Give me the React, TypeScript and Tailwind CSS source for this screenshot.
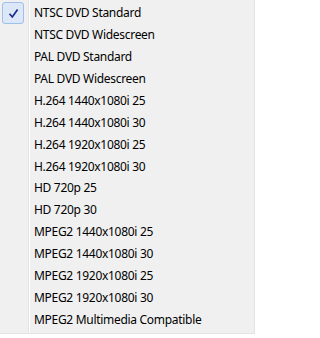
import React from 'react';

const items = [
  'NTSC DVD Standard',
  'NTSC DVD Widescreen',
  'PAL DVD Standard',
  'PAL DVD Widescreen',
  'H.264 1440x1080i 25',
  'H.264 1440x1080i 30',
  'H.264 1920x1080i 25',
  'H.264 1920x1080i 30',
  'HD 720p 25',
  'HD 720p 30',
  'MPEG2 1440x1080i 25',
  'MPEG2 1440x1080i 30',
  'MPEG2 1920x1080i 25',
  'MPEG2 1920x1080i 30',
  'MPEG2 Multimedia Compatible',
];

const App: React.FC = () => {
  return (
    <div className="w-[258px] h-[338px] bg-white">
      <div
        className="flex w-[255px] h-[334px] bg-[#f0f0f0] border-r border-b border-[#e3e3e3] text-[12px] tracking-[-0.3px] text-black"
        style={{ fontFamily: '"Noto Sans", "Open Sans", sans-serif' }}
      >
        {/* check gutter */}
        <div className="w-[29px] shrink-0 border-r border-[#e2e3e3] pt-[2px] pl-[2px]">
          <div className="w-[22px] h-[22px] rounded-[3px] border border-[#9ec0ea] bg-[#dce8f8] flex items-center justify-center">
            <svg width="11" height="11" viewBox="0 0 11 11">
              <path d="M1.5 5.8 L4.3 9 L9.6 1.5" fill="none" stroke="#1a2b8c" strokeWidth="1.7" />
            </svg>
          </div>
        </div>
        <div className="w-px shrink-0 bg-white" />

        {/* items */}
        <div className="flex flex-col py-[2px] pl-[4px]">
          {items.map((label) => (
            <div key={label} className="flex items-center h-[22px] whitespace-nowrap">
              {label}
            </div>
          ))}
        </div>
      </div>
    </div>
  );
};

export default App;
